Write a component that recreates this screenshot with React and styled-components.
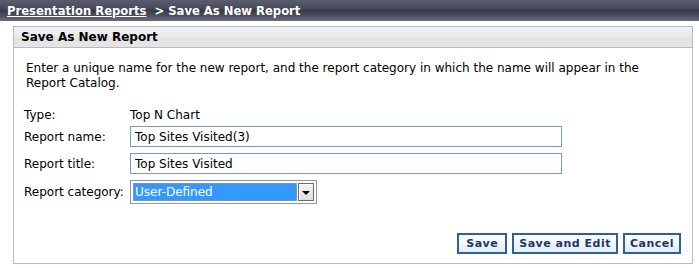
import React from "react";
import styled, { createGlobalStyle } from "styled-components";

const Global = createGlobalStyle`
  html, body { margin: 0; padding: 0; background: #fff; }
  body { font-family: "DejaVu Sans", Verdana, sans-serif; font-size: 12px; color: #000; }
`;

const TitleBar = styled.div`
  height: 21px;
  background: linear-gradient(#5a5d6e 0%, #4a4d5e 35%, #393b4b 50%, #4c4f61 75%, #6a6d7f 100%);
  color: #fff;
  font-weight: bold;
  font-size: 11.6px;
  display: flex;
  align-items: center;
  padding-left: 7px;
  gap: 8px;
  box-sizing: border-box;
`;

const Crumb = styled.a`
  color: #fff;
  text-decoration: underline;
`;

const Panel = styled.div`
  margin: 5px 0 0 13px;
  width: 680px;
  border: 1px solid #b8b9c8;
  box-sizing: border-box;
`;

const PanelHeader = styled.div`
  height: 20px;
  border-bottom: 1px solid #b8b9c8;
  background: linear-gradient(#f0f0f0 0%, #ececec 45%, #e2e2e2 55%, #e6e6e6 100%);
  font-weight: bold;
  font-size: 12px;
  display: flex;
  align-items: center;
  padding-left: 7px;
`;

const PanelBody = styled.div`
  padding: 13px 11px 9px 10px;
`;

const Intro = styled.p`
  margin: 0 0 0 2px;
  line-height: 15px;
`;

const Form = styled.div`
  margin-top: 19px;
  display: grid;
  grid-template-columns: 106px 1fr;
  grid-template-rows: 10px 21px 21px 24px;
  row-gap: 6px;
  align-items: center;
`;

const Label = styled.div`
  line-height: 10px;
`;

const Value = styled.div`
  line-height: 10px;
`;

const TextInput = styled.input`
  display: block;
  width: 432px;
  height: 21px;
  box-sizing: border-box;
  border: 1px solid #7b9cc3;
  font-family: inherit;
  font-size: 12px;
  padding: 0 4px;
  margin: 0;
  outline: none;
`;

const SelectBox = styled.div`
  width: 187px;
  height: 24px;
  box-sizing: border-box;
  border: 1px solid #7b9cc3;
  display: flex;
  align-items: center;
  padding: 2px;
  gap: 1px;
  line-height: normal;
`;

const SelectValue = styled.div`
  flex: 1;
  height: 100%;
  background: #3399ff;
  color: #fff;
  outline: 1px dotted #e88a3c;
  outline-offset: -1px;
  display: flex;
  align-items: center;
  padding-left: 2px;
`;

const DropButton = styled.div`
  width: 16px;
  height: 18px;
  box-sizing: border-box;
  border: 1px solid #6d6d6d;
  background: linear-gradient(#f4f4f4, #dcdcdc);
  box-shadow: inset 1px 1px 0 #fff;
  display: flex;
  align-items: center;
  justify-content: center;
`;

const Arrow = styled.div`
  width: 0;
  height: 0;
  border-left: 4px solid transparent;
  border-right: 4px solid transparent;
  border-top: 4px solid #000;
  margin-top: 2px;
`;

const Actions = styled.div`
  margin-top: 29px;
  display: flex;
  justify-content: flex-end;
  gap: 5px;
`;

const Button = styled.button`
  height: 21px;
  box-sizing: border-box;
  border: 2px solid #2e6196;
  background: linear-gradient(#ffffff, #e4ecfa);
  color: #163a68;
  font-family: inherit;
  font-weight: bold;
  font-size: 11px;
  letter-spacing: 0.5px;
  padding: 0 ${(p) => p.$pad}px;
  margin: 0;
  cursor: pointer;
`;

export default function App() {
  return (
    <>
      <Global />
      <TitleBar>
        <Crumb>Presentation Reports</Crumb>
        <span>&gt; Save As New Report</span>
      </TitleBar>
      <Panel>
        <PanelHeader>Save As New Report</PanelHeader>
        <PanelBody>
          <Intro>
            Enter a unique name for the new report, and the report category in which the name will appear in the
            Report Catalog.
          </Intro>
          <Form>
            <Label>Type:</Label>
            <Value>Top N Chart</Value>
            <Label>Report name:</Label>
            <Value>
              <TextInput defaultValue="Top Sites Visited(3)" />
            </Value>
            <Label>Report title:</Label>
            <Value>
              <TextInput defaultValue="Top Sites Visited" />
            </Value>
            <Label>Report category:</Label>
            <Value>
              <SelectBox>
                <SelectValue>User-Defined</SelectValue>
                <DropButton>
                  <Arrow />
                </DropButton>
              </SelectBox>
            </Value>
          </Form>
          <Actions>
            <Button $pad={7}>Save</Button>
            <Button $pad={5}>Save and Edit</Button>
            <Button $pad={5}>Cancel</Button>
          </Actions>
        </PanelBody>
      </Panel>
    </>
  );
}
